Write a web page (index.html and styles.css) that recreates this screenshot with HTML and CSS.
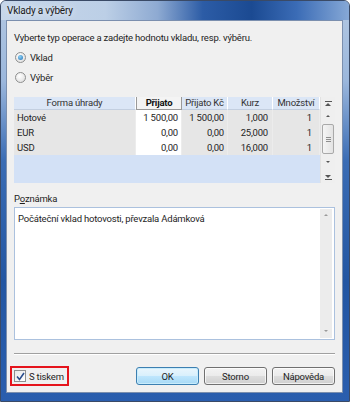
FILE: index.html
```html
<!DOCTYPE html>
<html>
<head>
    <meta charset="utf-8">
    <title>Vklady a výběry</title>
    <link rel="stylesheet" href="styles.css">
</head>
<body>
    <div class="window">
        <div class="titlebar">Vklady a výběry</div>
        <div class="client">
            <p class="intro">Vyberte typ operace a zadejte hodnotu vkladu, resp. výběru.</p>
            <div class="radio-row"><span class="radio checked"></span>Vklad</div>
            <div class="radio-row second"><span class="radio"></span>Výběr</div>

            <div class="grid">
                <div class="hd">Forma úhrady</div>
                <div class="hd active">Přijato</div>
                <div class="hd">Přijato Kč</div>
                <div class="hd">Kurz</div>
                <div class="hd">Množství</div>
                <div class="vscroll">
                    <span class="sb-btn first"><i class="bar"></i><i class="up"></i></span>
                    <span class="sb-btn"><i class="up small"></i></span>
                    <span class="thumb"><i class="grip"></i></span>
                    <span class="sb-btn"><i class="down small"></i></span>
                    <span class="sb-btn last"><i class="down"></i><i class="bar"></i></span>
                </div>

                <div class="cell txt">Hotové</div>
                <div class="cell edit">1 500,00</div>
                <div class="cell kc">1 500,00</div>
                <div class="cell kurz">1,000</div>
                <div class="cell">1</div>

                <div class="cell txt">EUR</div>
                <div class="cell edit">0,00</div>
                <div class="cell kc">0,00</div>
                <div class="cell kurz">25,000</div>
                <div class="cell">1</div>

                <div class="cell txt">USD</div>
                <div class="cell edit">0,00</div>
                <div class="cell kc">0,00</div>
                <div class="cell kurz">16,000</div>
                <div class="cell">1</div>

                <div class="empty"></div>
            </div>

            <div class="note-label">P<u>o</u>známka</div>
            <div class="note">
                <div class="note-text">Počáteční vklad hotovosti, převzala Adámková</div>
                <div class="note-scroll">
                    <i class="up small dim"></i>
                    <i class="down small dim"></i>
                </div>
            </div>

            <div class="sep"></div>

            <div class="footer">
                <div class="print"><span class="check">
                    <svg width="9" height="9" viewBox="0 0 9 9"><path d="M1 4.5 L3.5 7.5 L8 1" fill="none" stroke="#2a4d8c" stroke-width="1.6"/></svg>
                </span>S tiskem</div>
                <div class="buttons">
                    <button class="btn default">OK</button>
                    <button class="btn">Storno</button>
                    <button class="btn">Nápověda</button>
                </div>
            </div>
        </div>
    </div>
</body>
</html>
```

FILE: styles.css
```css
body {
    margin: 0;
    font-family: Roboto, "Liberation Sans", sans-serif;
    font-size: 9.5px;
    letter-spacing: -0.2px;
    color: #1e1e1e;
    background: #fff;
}
.window {
    width: 350px;
    height: 402px;
    box-sizing: border-box;
    border: 1px solid #3a4a66;
    border-radius: 6px 6px 0 0;
    background: linear-gradient(180deg, #b3c8e2 0%, #9bb7dc 20%, #3a6cb4 40%, #2356a2 70%, #2a5eae 100%);
    padding: 0 6px 8px 5px;
    display: flex;
    flex-direction: column;
}
.titlebar {
    height: 19px;
    margin: 0 -6px 0 -5px;
    padding-left: 6px;
    line-height: 19px;
    font-size: 10px;
    color: #1a1a1a;
    border-radius: 5px 5px 0 0;
    background: linear-gradient(90deg, #c7d7ea 0%, #bccfe6 30%, #8eaad2 45%, #2c5ca6 58%, #1b4a92 72%, #3b6cb6 85%, #86a8d6 100%);
    text-shadow: 0 0 6px rgba(255, 255, 255, 0.9);
}
.client {
    flex: 1;
    background: #f0f0f0;
    border: 1px solid #7b8fae;
    padding: 0 7px 0 7px;
    display: flex;
    flex-direction: column;
    white-space: nowrap;
}
.intro {
    margin: 9px 0 0;
    line-height: 15px;
    height: 15px;
}
.radio-row {
    display: flex;
    align-items: center;
    height: 14px;
    margin-top: 5px;
}
.radio-row.second {
    margin-top: 6px;
}
.radio {
    width: 9px;
    height: 9px;
    border-radius: 50%;
    border: 1px solid #8e8f8f;
    background: radial-gradient(circle at 40% 35%, #ffffff, #d9d9d9);
    margin: 0 4px 0 1px;
    position: relative;
}
.radio.checked::after {
    content: "";
    position: absolute;
    left: 2px;
    top: 2px;
    width: 5px;
    height: 5px;
    border-radius: 50%;
    background: radial-gradient(circle at 40% 35%, #8fd3f5, #1f6fb8);
}

/* tabulka */
.grid {
    margin-top: 13px;
    height: 86px;
    display: grid;
    grid-template-columns: 122px 46px 46px 45px 47px 15px;
    grid-template-rows: 13px 15px 15px 15px 1fr;
    background: #d3e1f6;
}
.hd {
    background: #dbe6f6;
    border-right: 1px solid #fff;
    border-bottom: 1px solid #c3cfe0;
    text-align: center;
    line-height: 12px;
    color: #333;
    overflow: hidden;
}
.hd.active {
    background: #f4f4f4;
    border: 1px solid #9a9a9a;
    border-top: 0;
    font-weight: bold;
    color: #111;
}
.cell {
    background: #e6e6e6;
    text-align: right;
    padding-right: 7px;
    line-height: 15px;
    border-right: 1px solid #ececec;
    overflow: hidden;
}
.cell.txt {
    text-align: left;
    padding-left: 3px;
}
.cell.edit {
    background: #fff;
    padding-right: 3px;
}
.cell.kc {
    padding-right: 3px;
}
.cell.kurz {
    padding-right: 4px;
}
.empty {
    grid-column: 1 / 6;
}
.vscroll {
    grid-column: 6;
    grid-row: 1 / 6;
    background: #efefef;
    border-left: 1px solid #e2e2e2;
    display: flex;
    flex-direction: column;
    align-items: center;
}
.sb-btn {
    height: 12px;
    width: 13px;
    display: flex;
    flex-direction: column;
    align-items: center;
    justify-content: center;
    gap: 1px;
}
.sb-btn.first {
    height: 13px;
}
.sb-btn.last {
    margin-top: 3px;
}
.thumb {
    flex: 1;
    width: 12px;
    margin: 2px 0 2px;
    border: 1px solid #a9a9a9;
    border-radius: 2px;
    background: linear-gradient(90deg, #f5f5f5, #e3e3e3);
    display: flex;
    align-items: center;
    justify-content: center;
    box-sizing: border-box;
}
.grip {
    width: 5px;
    height: 5px;
    background: repeating-linear-gradient(180deg, #8e8e8e 0 1px, transparent 1px 2px);
}
.bar {
    width: 7px;
    height: 1px;
    background: #555;
}
.up, .down {
    width: 0;
    height: 0;
    border-left: 3.5px solid transparent;
    border-right: 3.5px solid transparent;
}
.up {
    border-bottom: 3px solid #555;
}
.down {
    border-top: 3px solid #555;
}
.up.small {
    border-left-width: 2.5px;
    border-right-width: 2.5px;
    border-bottom-width: 2px;
}
.down.small {
    border-left-width: 2.5px;
    border-right-width: 2.5px;
    border-top-width: 2px;
}
.up.dim {
    border-bottom-color: #9a9a9a;
}
.down.dim {
    border-top-color: #9a9a9a;
}

/* poznámka */
.note-label {
    margin-top: 9px;
    line-height: 14px;
    height: 14px;
}
.note {
    margin-top: 1px;
    height: 133px;
    box-sizing: border-box;
    border: 1px solid #abc1de;
    background: #fff;
    display: flex;
}
.note-text {
    flex: 1;
    padding: 4px 3px;
    line-height: 14px;
}
.note-scroll {
    width: 12px;
    margin: 1px 2px 1px 0;
    background: #ececec;
    display: flex;
    flex-direction: column;
    align-items: center;
    justify-content: space-between;
    padding: 5px 0 6px;
}

.sep {
    margin-top: 13px;
    height: 1px;
    background: #a0a0a0;
    border-bottom: 1px solid #fff;
}
.footer {
    margin-top: 11px;
    display: flex;
    align-items: center;
    justify-content: space-between;
    height: 20px;
}
.print {
    margin-left: -4px;
    height: 20px;
    box-sizing: border-box;
    border: 2px solid #e5141c;
    padding: 0 3px 0 2px;
    display: flex;
    align-items: center;
}
.check {
    width: 10px;
    height: 10px;
    border: 1px solid #8e8f8f;
    background: linear-gradient(135deg, #e8e8e8, #ffffff);
    margin-right: 3px;
    display: flex;
    align-items: center;
    justify-content: center;
}
.buttons {
    display: flex;
    gap: 5px;
}
.btn {
    width: 63px;
    height: 18px;
    font: inherit;
    letter-spacing: inherit;
    color: #1e1e1e;
    padding: 0;
    border: 1px solid #707070;
    border-radius: 3px;
    background: linear-gradient(180deg, #f3f3f3 0%, #ebebeb 48%, #dddddd 52%, #cfcfcf 100%);
    box-shadow: inset 0 0 0 1px rgba(255, 255, 255, 0.7);
}
.btn.default {
    border-color: #3c7fb1;
    background: linear-gradient(180deg, #eaf6fd 0%, #d9f0fc 48%, #bee6fd 52%, #a7d9f5 100%);
    box-shadow: inset 0 0 0 1px #c8ecfc;
}
```
